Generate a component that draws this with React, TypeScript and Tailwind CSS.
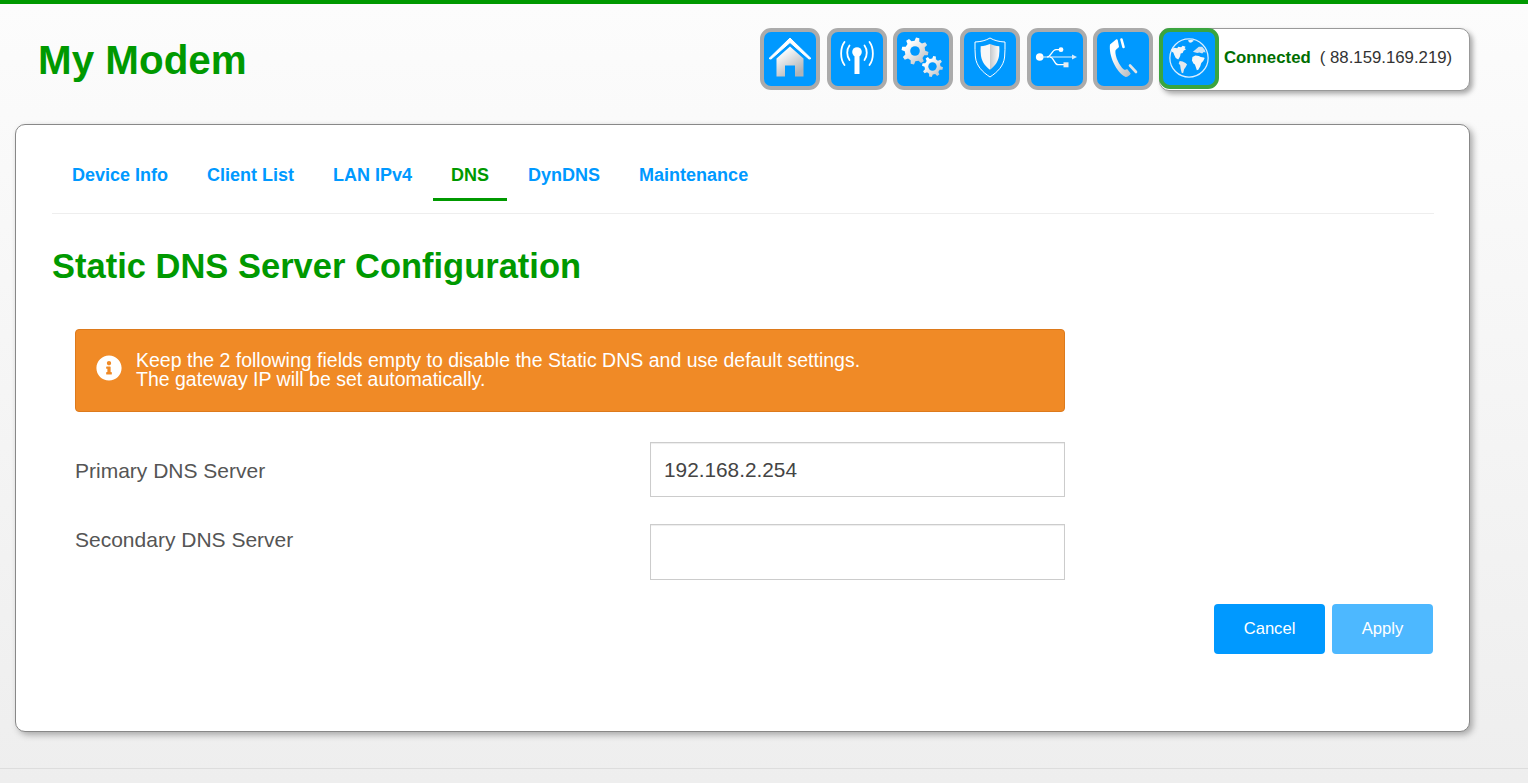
import { FaInfoCircle } from "react-icons/fa";

const tabs = ["Device Info", "Client List", "LAN IPv4", "DNS", "DynDNS", "Maintenance"];

function gearPath(cx: number, cy: number, r: number, teeth: number) {
  const inner = r * 0.76;
  const step = (Math.PI * 2) / teeth;
  const pts: string[] = [];
  for (let i = 0; i < teeth; i++) {
    const a = i * step + 0.2;
    const corners: [number, number][] = [
      [inner, a - step * 0.3],
      [r, a - step * 0.16],
      [r, a + step * 0.16],
      [inner, a + step * 0.3],
    ];
    corners.forEach(([rad, ang]) => {
      pts.push(`${(cx + rad * Math.cos(ang)).toFixed(2)} ${(cy + rad * Math.sin(ang)).toFixed(2)}`);
    });
  }
  return `M${pts.join("L")}Z`;
}

function Grad({ id }: { id: string }) {
  return (
    <defs>
      <linearGradient id={id} x1="0" y1="0" x2="1" y2="1">
        <stop offset="0.25" stopColor="#ffffff" />
        <stop offset="1" stopColor="#b4b8bc" />
      </linearGradient>
    </defs>
  );
}

function HomeIcon() {
  return (
    <svg viewBox="0 0 52 54" className="w-full h-full">
      <defs>
        <linearGradient id="home" x1="0" y1="0" x2="0.6" y2="1">
          <stop offset="0.2" stopColor="#ffffff" />
          <stop offset="1" stopColor="#b0b4b8" />
        </linearGradient>
      </defs>
      <path d="M5 26.500L26 6l21 20.500-2 .6L26 10.500 7 27.100z" fill="#fff" stroke="#fff" strokeWidth="1" />
      <path d="M26 14.500L39.500 26.500v18H31V33.500H21v11H12.500V26.500z" fill="url(#home)" />
    </svg>
  );
}

function AntennaIcon() {
  return (
    <svg viewBox="0 0 52 54" className="w-full h-full" fill="none" stroke="#fff" strokeLinecap="round">
      <circle cx="26" cy="20" r="4.800" fill="#fff" stroke="none" />
      <rect x="23.500" y="21" width="5" height="21" fill="#fff" stroke="none" />
      <path d="M18.500 13.500c-3 4-3 10.500 0 14.500M33.500 13.500c3 4 3 10.500 0 14.500" strokeWidth="1.800" />
      <path d="M13.500 10c-4.500 6-4.500 17 0 23M38.500 10c4.500 6 4.500 17 0 23" strokeWidth="1.800" />
    </svg>
  );
}

function GearsIcon() {
  return (
    <svg viewBox="0 0 52 54" className="w-full h-full">
      <Grad id="gears" />
      <path d={gearPath(18, 19, 13.500, 8)} fill="url(#gears)" />
      <circle cx="18" cy="19" r="4.800" fill="#0099ff" />
      <path d={gearPath(35.500, 34.500, 10.500, 8)} fill="url(#gears)" />
      <circle cx="35.500" cy="34.500" r="4.200" fill="#0099ff" />
    </svg>
  );
}

function ShieldIcon() {
  return (
    <svg viewBox="0 0 52 54" className="w-full h-full">
      <defs>
        <linearGradient id="shield" x1="0" y1="0" x2="1" y2="0">
          <stop offset="0" stopColor="#c6c9cc" />
          <stop offset="1" stopColor="#ffffff" />
        </linearGradient>
      </defs>
      <path d="M26 6c4 2.500 9.500 3.800 15 4-.1 5 .2 10-.4 15-1 9-7 15-14.600 20-7.600-5-13.600-11-14.600-20-.6-5-.3-10-.4-15 5.500-.2 11-1.500 15-4z" fill="none" stroke="#fff" strokeWidth="1" />
      <path d="M26 12c2.800 1.300 6 2 9.300 2.300.2 3.200.2 6.500-.3 9.700-1 6-4.500 10.500-9 13.700z" fill="url(#shield)" />
      <path d="M26 12c-2.800 1.300-6 2-9.300 2.300-.2 3.200-.2 6.500.3 9.700 1 6 4.500 10.500 9 13.700z" fill="#f6f7f8" />
    </svg>
  );
}

function UsbIcon() {
  return (
    <svg viewBox="0 0 52 54" className="w-full h-full">
      <circle cx="8.700" cy="25" r="3.800" fill="#fff" />
      <path d="M9 25H42" stroke="#e4f3ff" strokeWidth="1.200" />
      <path d="M46 25l-5-2.500v5z" fill="#d8ecfb" />
      <path d="M16 25c4 0 5-7.300 9-7.300h4M19 25c4 0 4 7.700 8 7.700h6" fill="none" stroke="#fff" strokeWidth="1.200" />
      <circle cx="30" cy="17.700" r="2.400" fill="#fff" />
      <rect x="32.500" y="30.300" width="5" height="5" fill="#e8edf0" />
    </svg>
  );
}

function PhoneIcon() {
  return (
    <svg viewBox="0 0 52 54" className="w-full h-full">
      <Grad id="phone" />
      <path d="M13 12.500L19 7.500c.8-.6 1.500-.2 1.700.6l1.300 6.400c.2 1.500-3.300 2.500-3.600 4.500-.5 5 4 15 8.500 18.500 1.500 1 2.500-.6 3.500-.3l3.300 4.300c-.5 1.500-3 3.500-5 3.500C19 40.500 11.500 23 13 12.500z" fill="url(#phone)" />
      <path d="M24.500 7.500l2 7.500" stroke="#fff" strokeWidth="2.600" strokeLinecap="round" />
      <path d="M33 33.500l6 6.500" stroke="#e2e4e6" strokeWidth="2.600" strokeLinecap="round" />
    </svg>
  );
}

function GlobeIcon() {
  return (
    <svg viewBox="0 0 52 54" className="w-full h-full">
      <circle cx="26" cy="26.500" r="19.500" fill="none" stroke="#d9eeff" strokeWidth="1.300" />
      <path d="M8 17.500l3-1.500 3 .5 1-1.500 3 .5 1.500-1.500 3 1-1 1.500 1.500 1-2.500 1.500-1 2.500-2 .5-.5 2.500-1 2-1 1.500-2.500-1.500-1.500-3-1-2.500-1.500-1z" fill="#f3f5f7" />
      <path d="M16.500 29.500l3 .5 3 1.500 1.500 1.500-1.500 3-1.500 2-1 4-1.500-.5-1-4-.5-3.500-1.500-2z" fill="#e4e8ec" />
      <path d="M29.500 25.500l3-1.500 3.500.5 2 1 3 .5 1 .5-1.500 3-2 2-1 3.500-2 3.500-1.500.5-1-3-1-3-1.500-1-1.500-3z" fill="#f6f7f8" />
      <path d="M30 20l3-2.500 3-2.500 3.500 0 2.500 3 1 3-2-.5-1.500 1.500-3-1-2 .5-2-.5z" fill="#cfe3f4" />
      <path d="M25 8.500l4-.5 2 1-3 2-2-.5z" fill="#ecf2f7" />
    </svg>
  );
}

function IconButton({ children, active }: { children: React.ReactNode; active?: boolean }) {
  return (
    <button
      className={`w-[60px] shrink-0 rounded-[11px] border-4 bg-[#0099ff] ${
        active ? "h-[61px] border-[#3aa53f]" : "h-[62px] border-[#ababab]"
      }`}
    >
      {children}
    </button>
  );
}

function TopBar() {
  return (
    <div className="h-[120px] flex items-start justify-between pl-[38px] pr-[58px] pt-6">
      <h1 className="mt-[9px] text-[40.4px] leading-[46px] font-bold text-[#009900]">My Modem</h1>
      <div className="flex gap-[6.67px]">
        <IconButton><HomeIcon /></IconButton>
        <IconButton><AntennaIcon /></IconButton>
        <IconButton><GearsIcon /></IconButton>
        <IconButton><ShieldIcon /></IconButton>
        <IconButton><UsbIcon /></IconButton>
        <IconButton><PhoneIcon /></IconButton>
        <div className="-ml-px w-[311px] h-[63px] flex items-start bg-white rounded-[10px] border border-[#999] shadow-[3px_3px_5px_#aaa]">
          <div className="-m-px flex">
            <IconButton active><GlobeIcon /></IconButton>
          </div>
          <span className="ml-[6px] mt-[19px] text-[16.8px] leading-[20px] font-bold text-[#006e00]">Connected</span>
          <span className="ml-[9px] mt-[19px] text-[16.8px] leading-[20px] text-[#333]">( 88.159.169.219)</span>
        </div>
      </div>
    </div>
  );
}

function Tabs() {
  return (
    <div className="flex gap-[3px] pl-[2px] pb-3 border-b border-[#eee]">
      {tabs.map((t) => (
        <a
          key={t}
          className={`px-[18px] h-[51px] pt-[3px] flex items-center text-[18px] font-bold border-b-[3px] ${
            t === "DNS" ? "text-[#009900] border-[#009900]" : "text-[#0099ff] border-transparent"
          }`}
        >
          {t}
        </a>
      ))}
    </div>
  );
}

export default function App() {
  return (
    <div
      className="h-[783px] overflow-hidden flex flex-col bg-gradient-to-b from-[#fcfcfc] to-[#eeeeee] border-t-4 border-[#009900]"
      style={{ fontFamily: '"Liberation Sans", Arial, sans-serif' }}
    >
      <TopBar />
      <div className="ml-[15px] w-[1455px] h-[608px] bg-white rounded-[10px] border border-[#888] shadow-[3px_3px_6px_#aaa] pl-9 pr-[35px] pt-[25px]">
        <Tabs />
        <h2 className="mt-[31px] text-[34.5px] leading-[42px] font-bold text-[#009900]">Static DNS Server Configuration</h2>
        <div className="ml-[23px] mt-[42px] w-[990px]">
          <div className="h-[83px] flex items-center bg-[#f08a26] border border-[#dd7a1c] rounded-[4px] pl-[20px] text-white">
            <FaInfoCircle className="w-[26px] h-[26px] shrink-0 -mt-[6px]" />
            <p className="ml-[14px] mb-[1px] text-[19.5px] leading-[19.5px]">
              Keep the 2 following fields empty to disable the Static DNS and use default settings.
              <br />
              The gateway IP will be set automatically.
            </p>
          </div>
          <div className="mt-[30px] flex items-center">
            <label className="w-[575px] pt-[2px] text-[21px] text-[#555]">Primary DNS Server</label>
            <input
              readOnly
              value="192.168.2.254"
              className="w-[415px] h-[55px] px-[13px] text-[20.8px] text-[#444] border border-[#ccc] shadow-[inset_0_1px_1px_rgba(0,0,0,0.075)]"
            />
          </div>
          <div className="mt-[27px] flex items-start">
            <label className="w-[575px] text-[21px] text-[#555]">Secondary DNS Server</label>
            <input
              readOnly
              className="w-[415px] h-[56px] px-[13px] text-[20.8px] text-[#444] border border-[#ccc] shadow-[inset_0_1px_1px_rgba(0,0,0,0.075)]"
            />
          </div>
        </div>
        <div className="mt-6 mr-px flex justify-end gap-[7px]">
          <button className="w-[111px] h-[50px] rounded-[4px] bg-[#0099ff] text-white text-[16.6px]">Cancel</button>
          <button className="w-[101px] h-[50px] rounded-[4px] bg-[#4db8ff] text-white text-[16.6px]">Apply</button>
        </div>
      </div>
      <div className="mt-[36px] border-t border-[#ddd]" />
    </div>
  );
}
